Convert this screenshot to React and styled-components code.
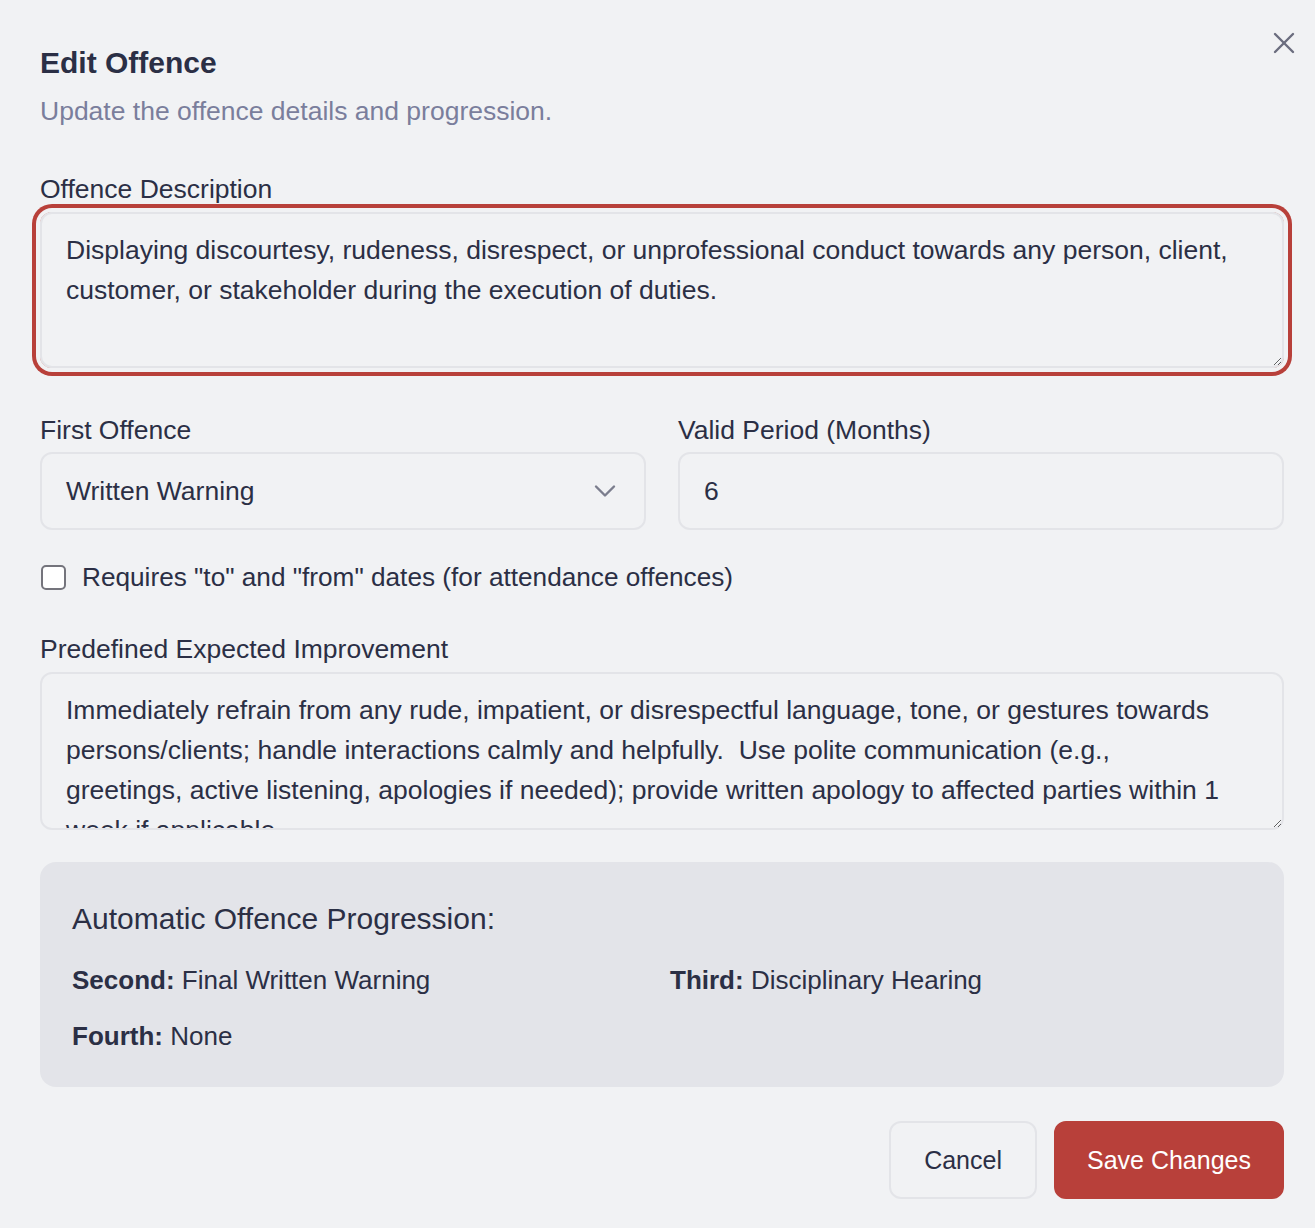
import styled, { createGlobalStyle } from "styled-components";
import { X, ChevronDown } from "lucide-react";

const GlobalStyle = createGlobalStyle`
  html, body {
    margin: 0;
    padding: 0;
    background: #f1f2f4;
  }
  body {
    font-family: "Liberation Sans", Arial, sans-serif;
    color: #2b2f45;
  }
  * {
    box-sizing: border-box;
  }
`;

const description =
  "Displaying discourtesy, rudeness, disrespect, or unprofessional conduct towards any person, client, customer, or stakeholder during the execution of duties.";

const improvement =
  "Immediately refrain from any rude, impatient, or disrespectful language, tone, or gestures towards persons/clients; handle interactions calmly and helpfully.  Use polite communication (e.g.,\ngreetings, active listening, apologies if needed); provide written apology to affected parties within 1 week if applicable.";

function App() {
  return (
    <>
      <GlobalStyle />
      <Dialog>
        <CloseButton aria-label="Close">
          <X size={36} strokeWidth={1.6} />
        </CloseButton>
        <Title>Edit Offence</Title>
        <Subtitle>Update the offence details and progression.</Subtitle>

        <Form>
          <Field>
            <Label>Offence Description</Label>
            <TextArea $focused $height={156} defaultValue={description} />
          </Field>

          <Columns $mt={45}>
            <Field $gap={5}>
              <Label>First Offence</Label>
              <SelectBox type="button">
                <span>Written Warning</span>
                <ChevronDown size={36} strokeWidth={1.6} color="#7b7d8d" />
              </SelectBox>
            </Field>
            <Field $gap={5}>
              <Label>Valid Period (Months)</Label>
              <Input defaultValue="6" />
            </Field>
          </Columns>

          <CheckRow $mt={30}>
            <CheckBox />
            <span>Requires "to" and "from" dates (for attendance offences)</span>
          </CheckRow>

          <Field $mt={38}>
            <Label>Predefined Expected Improvement</Label>
            <TextArea $height={158} defaultValue={improvement} />
          </Field>

          <Progression>
            <ProgressionTitle>Automatic Offence Progression:</ProgressionTitle>
            <ProgressionGrid>
              <Item>
                <strong>Second:</strong> Final Written Warning
              </Item>
              <Item>
                <strong>Third:</strong> Disciplinary Hearing
              </Item>
              <Item>
                <strong>Fourth:</strong> None
              </Item>
            </ProgressionGrid>
          </Progression>

          <Actions>
            <Button type="button">Cancel</Button>
            <Button type="button" $primary>
              Save Changes
            </Button>
          </Actions>
        </Form>
      </Dialog>
    </>
  );
}

const Dialog = styled.div`
  position: relative;
  padding: 43px 31px 30px 40px;
`;

const CloseButton = styled.button`
  position: absolute;
  top: 25px;
  right: 13px;
  width: 36px;
  height: 36px;
  padding: 0;
  border: none;
  background: none;
  color: #6b6d7e;
  display: flex;
  align-items: center;
  justify-content: center;
  cursor: pointer;
`;

const Title = styled.h2`
  margin: 0;
  font-size: 30px;
  line-height: 39px;
  font-weight: 700;
  color: #2b2f45;
`;

const Subtitle = styled.p`
  margin: 10px 0 0;
  font-size: 26.5px;
  line-height: 38px;
  color: #7a7e9c;
`;

const Form = styled.div`
  display: flex;
  flex-direction: column;
  margin-top: 42px;
`;

const Field = styled.div`
  display: flex;
  flex-direction: column;
  gap: ${(p) => p.$gap ?? 6}px;
  margin-top: ${(p) => p.$mt ?? 0}px;
`;

const Label = styled.label`
  font-size: 26.5px;
  line-height: 34px;
  color: #2b2f45;
`;

const TextArea = styled.textarea`
  display: block;
  width: 100%;
  height: ${(p) => p.$height}px;
  padding: 16px 12px 16px 24px;
  border: 2px solid #e3e4e8;
  border-radius: 12px;
  background: transparent;
  font-family: inherit;
  font-size: 26.5px;
  line-height: 40px;
  color: #2b2f45;
  resize: vertical;
  outline: none;
  scrollbar-width: none;
  white-space: pre-wrap;
  box-shadow: ${(p) =>
    p.$focused ? "0 0 0 4px #f1f2f4, 0 0 0 8px #b8403a" : "none"};
`;

const Columns = styled.div`
  display: grid;
  grid-template-columns: 1fr 1fr;
  gap: 32px;
  margin-top: ${(p) => p.$mt ?? 0}px;
`;

const fieldBox = `
  width: 100%;
  height: 78px;
  border: 2px solid #e3e4e8;
  border-radius: 12px;
  background: transparent;
  font-family: inherit;
  font-size: 26.5px;
  color: #2b2f45;
  outline: none;
`;

const SelectBox = styled.button`
  ${fieldBox}
  display: flex;
  align-items: center;
  justify-content: space-between;
  padding: 0 21px 0 24px;
  text-align: left;
  cursor: pointer;
`;

const Input = styled.input`
  ${fieldBox}
  padding: 0 24px;
`;

const CheckRow = styled.label`
  display: flex;
  align-items: center;
  gap: 16px;
  margin-top: ${(p) => p.$mt ?? 0}px;
  font-size: 26.2px;
  line-height: 34px;
  color: #2b2f45;
`;

const CheckBox = styled.span`
  width: 25px;
  height: 25px;
  flex-shrink: 0;
  margin-left: 1px;
  border: 2px solid #74747c;
  border-radius: 5px;
  background: #ffffff;
`;

const Progression = styled.div`
  margin-top: 32px;
  padding: 36px 32px 33px;
  border-radius: 16px;
  background: #e3e4e9;
`;

const ProgressionTitle = styled.h3`
  margin: 0 0 22px;
  font-size: 30px;
  line-height: 42px;
  font-weight: 400;
  color: #2b2f45;
`;

const ProgressionGrid = styled.div`
  display: grid;
  grid-template-columns: 1fr 1fr;
  column-gap: 16px;
  row-gap: 20px;
`;

const Item = styled.div`
  font-size: 26px;
  line-height: 36px;
  color: #2b2f45;

  strong {
    font-weight: 700;
  }
`;

const Actions = styled.div`
  display: flex;
  justify-content: flex-end;
  gap: 17px;
  margin-top: 34px;
`;

const Button = styled.button`
  height: 78px;
  padding: 0 ${(p) => (p.$primary ? 31 : 33)}px;
  border-radius: 12px;
  border: 2px solid ${(p) => (p.$primary ? "#b8403a" : "#e3e4e8")};
  background: ${(p) => (p.$primary ? "#b8403a" : "transparent")};
  color: ${(p) => (p.$primary ? "#ffffff" : "#2b2f45")};
  font-family: inherit;
  font-size: 25px;
  cursor: pointer;
`;

export default App;
